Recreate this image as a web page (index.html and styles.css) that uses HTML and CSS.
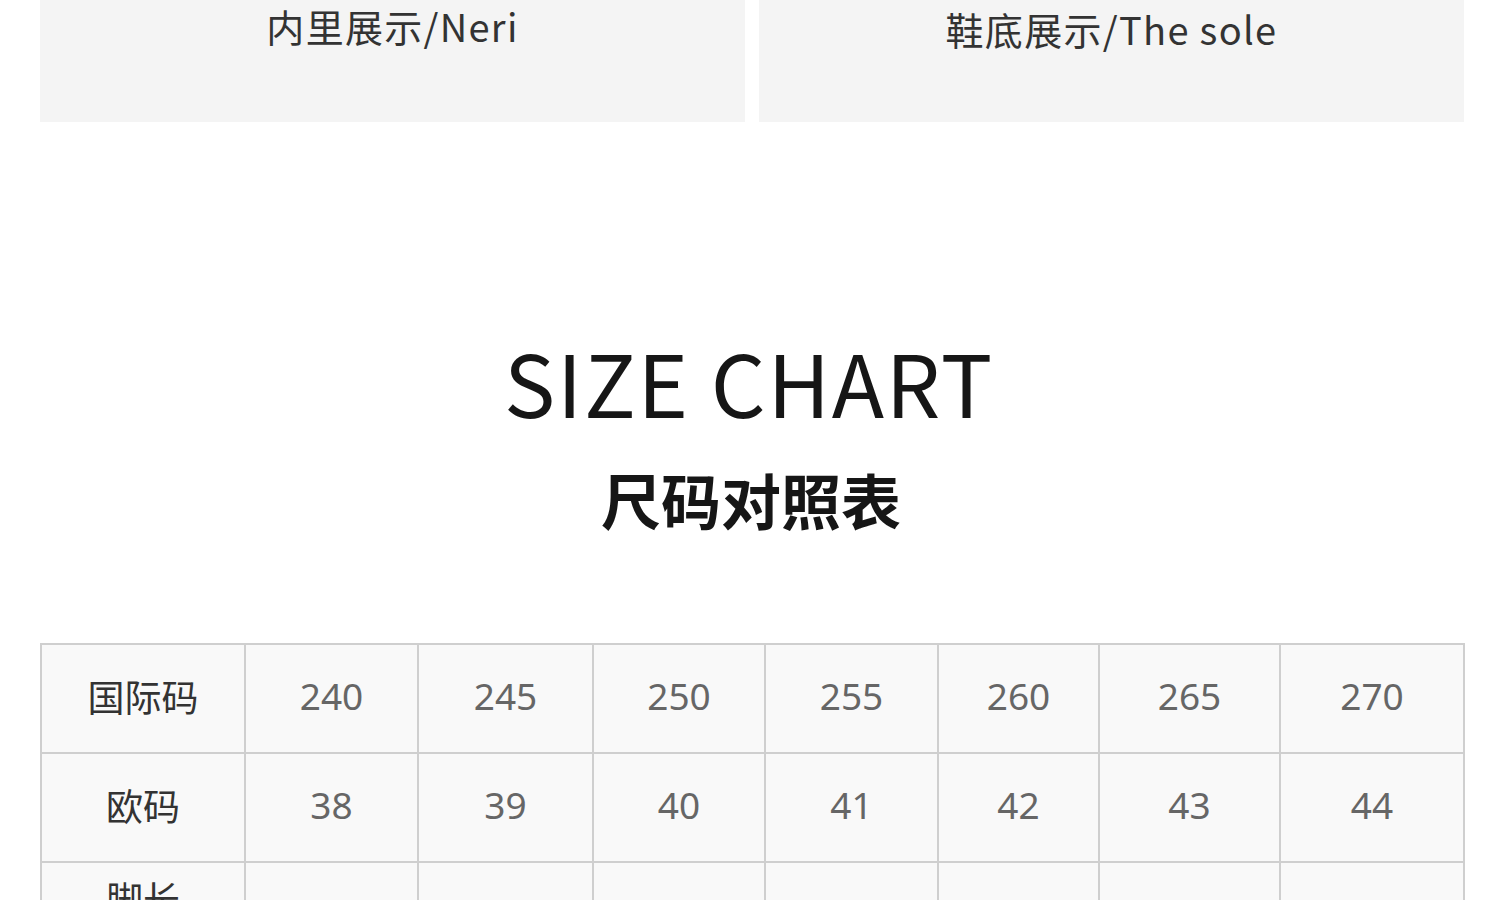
FILE: index.html
```html
<!DOCTYPE html>
<html lang="zh">
<head>
<meta charset="utf-8">
<title>Size Chart</title>
<link rel="stylesheet" href="styles.css">
</head>
<body>
<div class="page">
  <div class="cards">
    <div class="card"><p class="caption caption-left">内里展示/Neri</p></div>
    <div class="card"><p class="caption caption-right">鞋底展示/The sole</p></div>
  </div>

  <h2 class="title">SIZE CHART</h2>
  <h3 class="subtitle">尺码对照表</h3>

  <table class="chart">
    <colgroup>
      <col class="c1"><col class="c2"><col class="c3"><col class="c4">
      <col class="c5"><col class="c6"><col class="c7"><col class="c8">
    </colgroup>
    <tbody>
      <tr class="row">
        <th class="label">国际码</th>
        <td class="val">240</td><td class="val">245</td><td class="val">250</td><td class="val">255</td>
        <td class="val">260</td><td class="val">265</td><td class="val">270</td>
      </tr>
      <tr class="row">
        <th class="label">欧码</th>
        <td class="val">38</td><td class="val">39</td><td class="val">40</td><td class="val">41</td>
        <td class="val">42</td><td class="val">43</td><td class="val">44</td>
      </tr>
      <tr class="row row-tall">
        <th class="label">脚长<br>(cm)</th>
        <td class="val">24</td><td class="val">24.5</td><td class="val">25</td><td class="val">25.5</td>
        <td class="val">26</td><td class="val">26.5</td><td class="val">27</td>
      </tr>
    </tbody>
  </table>
</div>
</body>
</html>
```

FILE: styles.css
```css
html, body {
  margin: 0;
  padding: 0;
  background: #ffffff;
}

body {
  font-family: "Noto Sans CJK SC", "Noto Sans", sans-serif;
  color: #222;
}

.page {
  padding: 0 36px 0 40px;
}

.cards {
  display: flex;
  gap: 14px;
}

.card {
  flex: 1;
  height: 122px;
  background: #f4f4f4;
}

.caption {
  margin: 0;
  text-align: center;
  font-size: 38px;
  line-height: 50px;
  color: #333;
  letter-spacing: 1.3px;
}

.caption-left {
  padding-top: 1px;
}

.caption-right {
  padding-top: 4px;
}

.title {
  margin: 209px 0 0;
  padding-right: 6px;
  text-align: center;
  font-size: 86px;
  line-height: 100px;
  font-weight: 400;
  color: #161616;
  letter-spacing: 1.7px;
}

.subtitle {
  margin: 33px 0 0;
  padding-right: 2px;
  text-align: center;
  font-size: 60px;
  line-height: 70px;
  font-weight: 700;
  color: #161616;
}

.chart {
  margin-top: 109px;
  width: 1423px;
  border-collapse: collapse;
  table-layout: fixed;
}

.c1 { width: 204px; }
.c2 { width: 173px; }
.c3 { width: 175px; }
.c4 { width: 172px; }
.c5 { width: 173px; }
.c6 { width: 161px; }
.c7 { width: 181px; }
.c8 { width: 184px; }

.row {
  height: 109px;
}

.row-tall {
  height: 125px;
}

.label,
.val {
  border: 2px solid #cfcfcf;
  background: #f9f9f9;
  text-align: center;
  vertical-align: middle;
  font-size: 37px;
  line-height: 48px;
  padding: 0 0 6px;
}

.label {
  font-weight: 400;
  color: #333;
}

.val {
  font-family: "Noto Sans", "Noto Sans CJK SC", sans-serif;
  color: #666;
}
```
